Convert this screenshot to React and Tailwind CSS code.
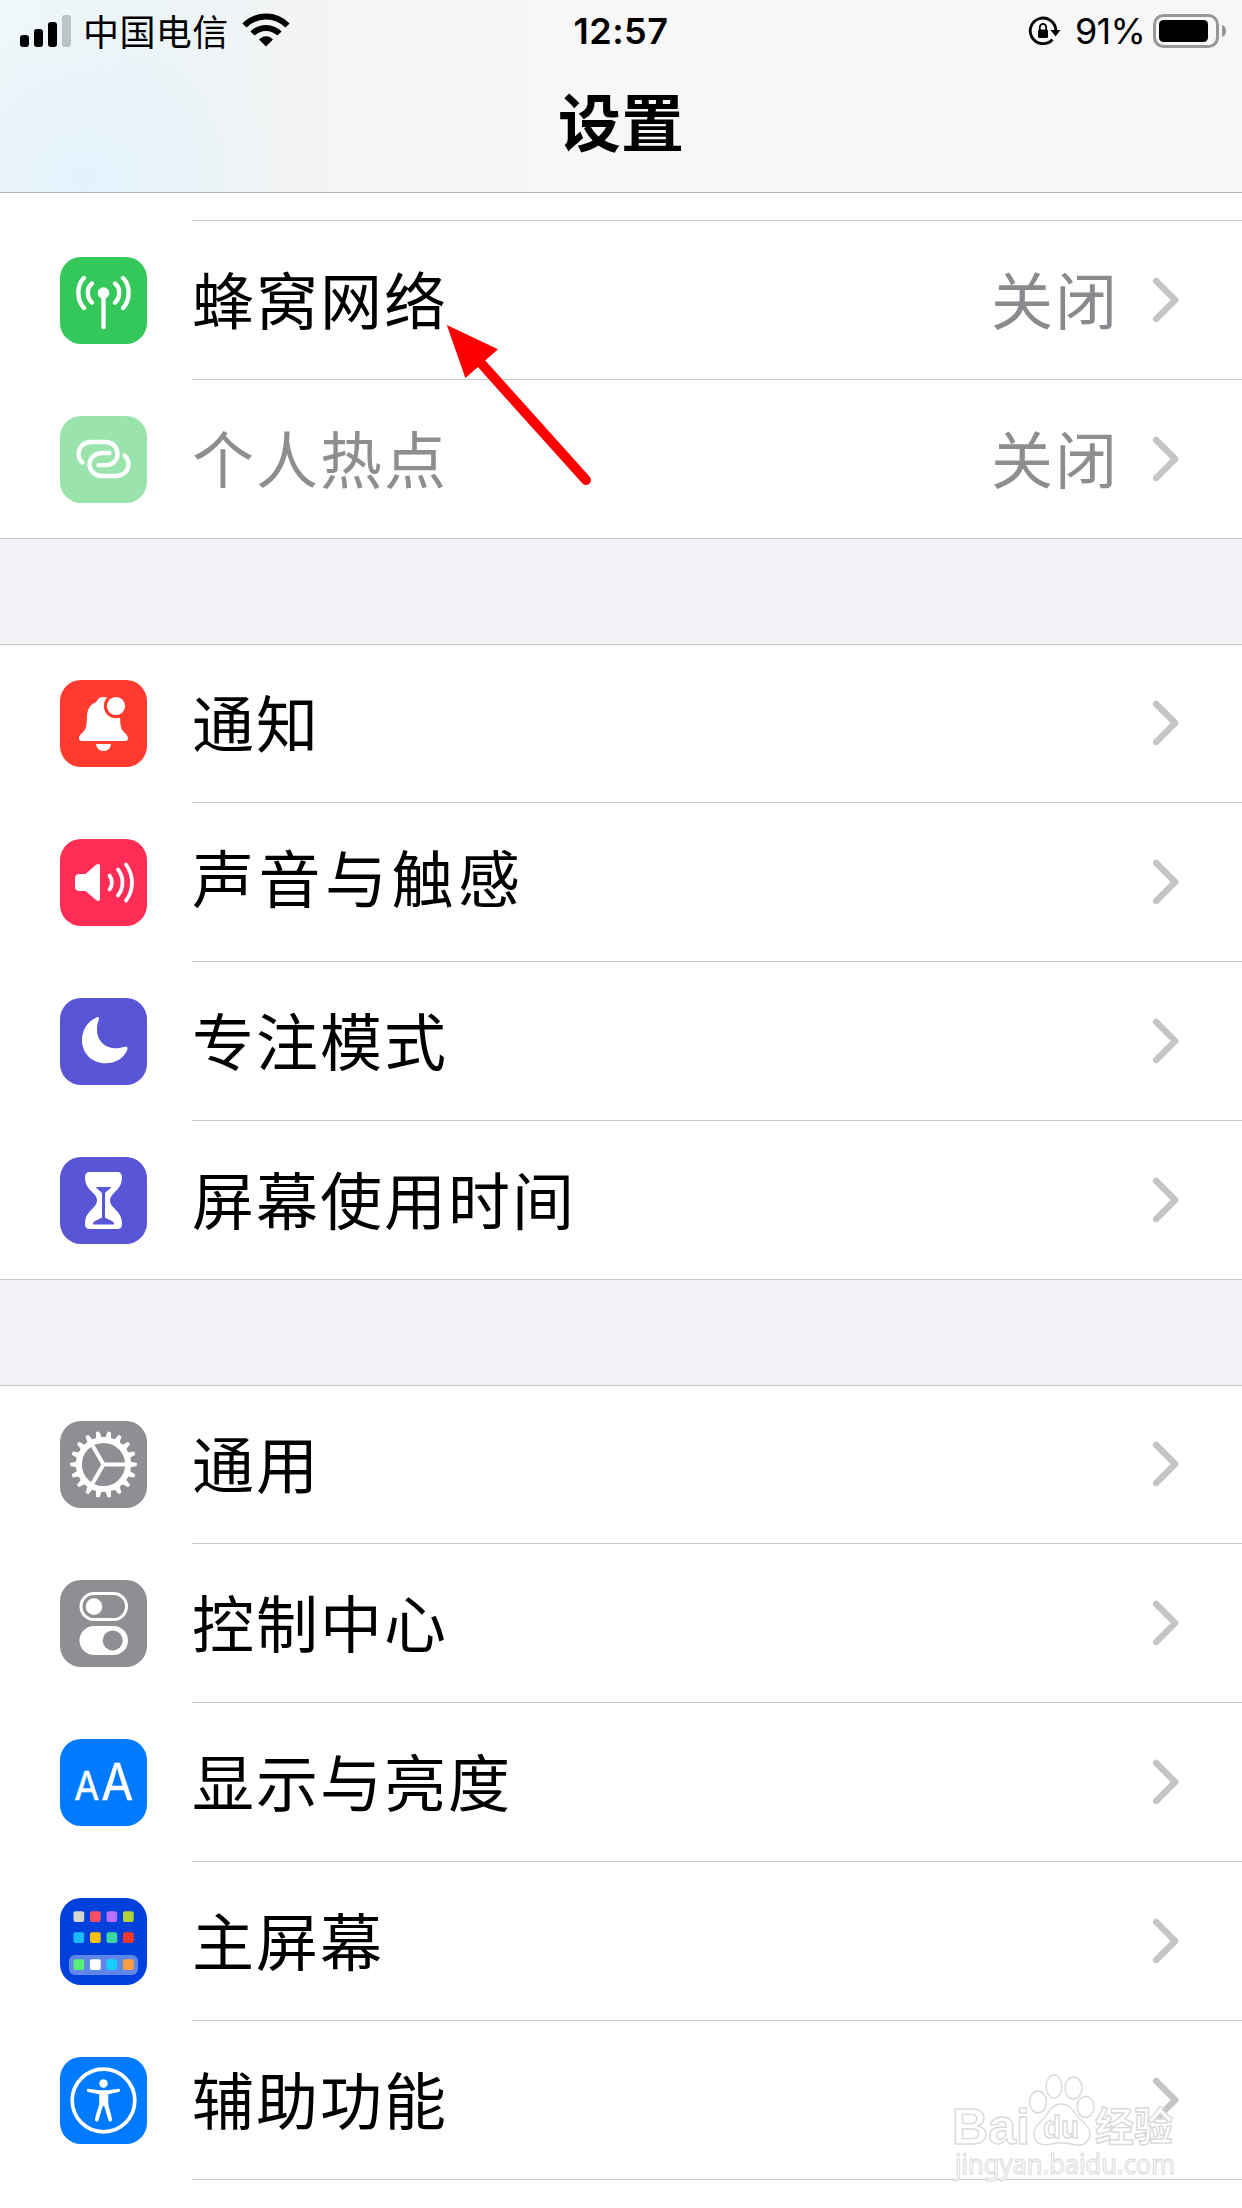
import React from 'react';

const SPOKES = [0, 120, 240];
const TEETH = Array.from({ length: 18 }, (_, i) => i * 20);

const APPS = [
    { x: 13.5, y: 13.3, fill: '#d8d5cd' },
    { x: 30, y: 13.3, fill: '#ff4f64' },
    { x: 46.5, y: 13.3, fill: '#b870ff' },
    { x: 63, y: 13.3, fill: '#b1d235' },
    { x: 13.5, y: 34.3, fill: '#1cbcfa' },
    { x: 30, y: 34.3, fill: '#ffc000' },
    { x: 46.5, y: 34.3, fill: '#3cd8a4' },
    { x: 63, y: 34.3, fill: '#f9382c' },
    { x: 13.5, y: 61.3, fill: '#58ef74' },
    { x: 30, y: 61.3, fill: '#ffffff' },
    { x: 46.5, y: 61.3, fill: '#1acdff' },
    { x: 63, y: 61.3, fill: '#ff9c40' },
];

// Iconos de cada fila, todos sobre un lienzo de 87x87
const icons = {
    cellular: (
        <g fill="none" stroke="#fff" strokeWidth="4.4" strokeLinecap="round">
            <circle cx="43.5" cy="36" r="5.8" fill="#fff" stroke="none" />
            <path d="M43.5 37v33" />
            <path d="M32 26.5C26.4 31 26.4 41 32 45.5M55 26.5C60.6 31 60.6 41 55 45.5" />
            <path d="M24 21C16.5 28 16.5 43.5 24 51M63 21C70.5 28 70.5 43.5 63 51" />
        </g>
    ),
    hotspot: (
        <g fill="none" stroke="#fff" strokeWidth="4.3" strokeLinecap="round">
            <path d="M22.6 46.5C20 44.5 18.6 41.5 18.6 38C18.6 31 24 26 31 26H45.5C52.5 26 57.5 31 57.5 38C57.5 44.5 52.5 49.2 46 49.2H38.5" />
            <path d="M49.5 37H42C35 37 29.5 42 29.5 48.5C29.5 55 35 60 42 60H56C63 60 68.5 55 68.5 48.5C68.5 44.5 67 41.5 64.5 39.5" />
        </g>
    ),
    bell: (
        <g fill="#fff">
            <path d="M43.5 17C39.5 17 37.2 19 36.3 22C30 24.5 27.3 29.5 27 36C26.7 43 26.6 48 24 51C21.5 54 19 55 19 58.5C19 60 20 61 22 61H65C67 61 68 60 68 58.5C68 55 65.5 54 63 51C60.4 48 60.3 43 60 36C59.7 29.5 57 24.5 50.7 22C49.8 19 47.5 17 43.5 17Z" />
            <path d="M36 64H51C50.5 68.5 47.5 71 43.5 71S36.5 68.5 36 64Z" />
            <circle cx="56" cy="26" r="12.2" fill="#ff3b30" />
            <circle cx="56" cy="26" r="9.1" />
        </g>
    ),
    sound: (
        <g fill="none" stroke="#fff" strokeWidth="3.8" strokeLinecap="round">
            <path d="M19.5 35H25.5L36 25.8C38 24.2 40 24.8 40 27V60C40 62 38 62.6 36 61L25.5 52H19.5C16.5 52 15 50.5 15 47.5V39.5C15 36.5 16.5 35 19.5 35Z" fill="#fff" stroke="none" />
            <path d="M49.5 36.5C52.7 40.5 52.7 46.5 49.5 50.5" />
            <path d="M58 30.5C64 38 64 49 58 56.5" />
            <path d="M66 25.5C74 36.5 74 51 66 61.5" />
        </g>
    ),
    moon: (
        <path fill="#fff" d="M38.9 20.8C38.3 24 37 26 37 32C37 43 45 50.3 56 50.3C61 50.3 63 48.8 65.8 48.8C67.7 48.9 68 50 67 52.5C63.5 60.5 55.5 65.3 45.5 65.3C32 65.3 22 55.5 22 42C22 32 27.5 23.5 36.5 19.4C38.3 18.6 39.2 19.3 38.9 20.8Z" />
    ),
    hourglass: (
        <g>
            <path fill="#fff" d="M29.5 15H57.5C60.5 15 62 17 62 20C62 28 58.5 31.5 54 36C51.5 38.5 50 40.5 50 43.5S51.5 48.5 54 51C58.5 55.5 62 59 62 67C62 70.5 60.5 72 57.5 72H29.5C26.5 72 25 70.5 25 67C25 59 28.5 55.5 33 51C35.5 48.5 37 46.5 37 43.5S35.5 38.5 33 36C28.5 31.5 25 28 25 20C25 17 26.5 15 29.5 15Z" />
            <path fill="#5856d6" d="M36 30H51C50.5 32 45 35 45 36.5V60.5C46 61.5 54 64 54 66.2C54 67.4 53.5 67.6 52.5 67.6H34.5C33.5 67.6 33 67.4 33 66.2C33 64 41 61.5 42 60.5V36.5C42 35 36.5 32 36 30Z" />
        </g>
    ),
    gear: (
        <g stroke="#fff" fill="none">
            <circle cx="43.5" cy="43.5" r="24.6" strokeWidth="6" />
            {TEETH.map((a) => (
                <path key={a} d="M70 40.5L76.8 41.9V45.1L70 46.5Z" fill="#fff" stroke="none" transform={`rotate(${a} 43.5 43.5)`} />
            ))}
            {SPOKES.map((a) => (
                <path key={a} d="M43 43.5H66" strokeWidth="4" transform={`rotate(${a} 43.5 43.5)`} />
            ))}
        </g>
    ),
    toggles: (
        <g fill="#fff">
            <rect x="21" y="13.5" width="45.5" height="26" rx="13" fill="none" stroke="#fff" strokeWidth="3" />
            <circle cx="34" cy="26.6" r="8.3" />
            <rect x="19.5" y="46" width="48.5" height="29" rx="14.5" />
            <circle cx="52.7" cy="60.4" r="10" fill="#8e8e93" />
        </g>
    ),
    letters: (
        <g fill="#fff" stroke="#fff" strokeWidth="0.5" strokeLinejoin="round" className="font-['Inter',sans-serif]">
            <text x="14.3" y="61" fontSize="39" textLength="25" lengthAdjust="spacingAndGlyphs">A</text>
            <text x="41.3" y="61" fontSize="50" textLength="32" lengthAdjust="spacingAndGlyphs">A</text>
        </g>
    ),
    home: (
        <g>
            <rect x="9" y="57" width="69" height="20" rx="6" fill="#5f87ea" />
            {APPS.map((app) => (
                <rect key={`${app.x}-${app.y}`} x={app.x} y={app.y} width="10.7" height="10.7" rx="2" fill={app.fill} />
            ))}
        </g>
    ),
    accessibility: (
        <g fill="#fff">
            <circle cx="43.5" cy="43.5" r="31.3" fill="none" stroke="#fff" strokeWidth="3.7" />
            <circle cx="43.5" cy="26.5" r="4.2" />
            <path d="M28.5 31.7L39 33.2H48L58.5 31.7C60.6 31.7 60.6 34.5 58.7 34.9L48.3 37.2V47C49 52 51.5 57 52 62.5C52 65 49 65.2 48.4 63L44.5 50C44 48.7 43 48.7 42.5 50L38.6 63C38 65.2 35 65 35 62.5C35.5 57 38.5 52 39.2 47V37.2L28.3 34.9C26.4 34.5 26.4 31.7 28.5 31.7Z" />
        </g>
    ),
};

const groups = [
    [
        { name: '蜂窝网络', icon: 'cellular', color: 'bg-[#34c759]', value: '关闭' },
        { name: '个人热点', icon: 'hotspot', color: 'bg-[#9ae3ac]', value: '关闭', disabled: true },
    ],
    [
        { name: '通知', icon: 'bell', color: 'bg-[#ff3b30]' },
        { name: '声音与触感', icon: 'sound', color: 'bg-[#ff2d55]', label: 'tracking-[4.5px] pb-[13px]' },
        { name: '专注模式', icon: 'moon', color: 'bg-[#5856d6]' },
        { name: '屏幕使用时间', icon: 'hourglass', color: 'bg-[#5856d6]' },
    ],
    [
        { name: '通用', icon: 'gear', color: 'bg-[#8e8e93]' },
        { name: '控制中心', icon: 'toggles', color: 'bg-[#8e8e93]' },
        { name: '显示与亮度', icon: 'letters', color: 'bg-[#007aff]' },
        { name: '主屏幕', icon: 'home', color: 'bg-[#0040dd]' },
        { name: '辅助功能', icon: 'accessibility', color: 'bg-[#007aff]' },
    ],
];

function classNames(...classes) {
    return classes.filter(Boolean).join(' ')
}

function StatusBar() {
    return (
        <div className="grid h-[62px] grid-cols-3 items-center">
            <div className="flex items-center pl-5">
                <svg width="52" height="32" viewBox="0 0 52 32">
                    <rect x="0" y="20" width="9" height="12" rx="3" />
                    <rect x="14" y="14" width="9" height="18" rx="3" />
                    <rect x="28" y="7" width="9" height="25" rx="3" />
                    <rect x="42" y="0" width="9" height="32" rx="3" fill="#bcc3c6" />
                </svg>
                <span className="ml-[11px] pb-[3px] text-[36px] leading-none tracking-[0.4px]">中国电信</span>
                <svg className="ml-[13px] mb-[2px]" width="48" height="34" viewBox="0 0 48 34" fill="none" stroke="#000" strokeWidth="6">
                    <path d="M2.5 12.5C14.5 0.5 33.5 0.5 45.5 12.5" />
                    <path d="M10.5 20.5C18 13 30 13 37.5 20.5" />
                    <path d="M17 26.5C21 22 27 22 31 26.5L24 33.5Z" fill="#000" stroke="none" />
                </svg>
            </div>
            <p className="text-center text-[36px] font-semibold leading-none tracking-[0.5px] font-['Inter','Noto_Sans_CJK_SC',sans-serif]">12:57</p>
            <div className="flex items-center justify-end pr-[15px]">
                <svg width="33" height="32" viewBox="0 0 33 32">
                    <path d="M24.5 24.5A12.8 12.8 0 1 1 27.8 15" fill="none" stroke="#000" strokeWidth="2.8" />
                    <path d="M22.5 15H32.5L27.5 21.5Z" />
                    <rect x="10" y="14.5" width="10" height="8.5" rx="1.5" />
                    <path d="M11.8 15V12.2A3.2 3.4 0 0 1 18.2 12.2V15" fill="none" stroke="#000" strokeWidth="1.8" />
                </svg>
                <span className="ml-[14px] text-[36px] leading-none tracking-[-0.8px] font-['Inter',sans-serif]">91%</span>
                <svg className="ml-[8px]" width="74" height="34" viewBox="0 0 74 34">
                    <rect x="1.5" y="1.5" width="63" height="31" rx="9" fill="none" stroke="#979797" strokeWidth="3" />
                    <rect x="6" y="6" width="49" height="22" rx="4.5" />
                    <path d="M69 11C72.5 12.5 73 15 73 17S72.5 21.5 69 23Z" fill="#979797" />
                </svg>
            </div>
        </div>
    );
}

function Row({ item }) {
    return (
        <li className="group flex h-[159px] items-center pl-[60px]">
            <div className={classNames('size-[87px] shrink-0 rounded-[21px]', item.color)}>
                <svg width="87" height="87" viewBox="0 0 87 87">{icons[item.icon]}</svg>
            </div>
            <div className="ml-[45px] flex h-full flex-1 items-center border-b border-[#c6c6c8] pr-[62px] group-last:border-transparent">
                <span className={classNames('flex-1 text-[62px] leading-none', item.label || 'pb-[5px] tracking-[2px]', item.disabled && 'text-[#8e8e8e]')}>
                    {item.name}
                </span>
                {item.value && (
                    <span className={classNames('mr-[33px] pb-[5px] text-[62px] leading-none tracking-[2px]', item.disabled ? 'text-[#8e8e8e]' : 'text-[#8a8a8e]')}>
                        {item.value}
                    </span>
                )}
                <svg width="28" height="46" viewBox="0 0 28 46" fill="none" stroke="#c5c5c7" strokeWidth="6.5" strokeLinecap="round" strokeLinejoin="round">
                    <path d="M4.2 4L23.2 23L4.2 42" />
                </svg>
            </div>
        </li>
    );
}

function Watermark() {
    return (
        <svg
            className="absolute left-[948px] top-[2068px]"
            width="240"
            height="120"
            viewBox="0 0 240 120"
            fill="#fff"
            stroke="#d9d9d9"
            strokeWidth="1.4"
        >
            <g className="font-['Liberation_Sans','Noto_Sans_CJK_SC',sans-serif]" fontWeight="700">
                <text x="4" y="76" fontSize="50" textLength="78" lengthAdjust="spacingAndGlyphs">Bai</text>
                <ellipse cx="90" cy="34" rx="8.5" ry="11" />
                <ellipse cx="106" cy="18.5" rx="8" ry="11.5" />
                <ellipse cx="125.5" cy="20" rx="8.5" ry="11" />
                <ellipse cx="137.5" cy="39" rx="8.5" ry="10.5" />
                <path d="M113 36C123 36 126 45 131 50C139 57 144 63 141 70C138 78 130 78 123 76C117 74.5 109 74.5 103 76C94 78 87 76 86 67C85 59 92 55 97 49C101 43 105 36 113 36Z" />
                <text x="95" y="70" fontSize="31" textLength="36" lengthAdjust="spacingAndGlyphs">du</text>
                <text x="147" y="73" fontSize="40" className="font-['Noto_Sans_CJK_SC',sans-serif]" textLength="78" lengthAdjust="spacingAndGlyphs">经验</text>
            </g>
            <text x="7" y="106" fontSize="27" strokeWidth="1" textLength="220" lengthAdjust="spacingAndGlyphs" className="font-['Noto_Sans',sans-serif]">jingyan.baidu.com</text>
        </svg>
    );
}

export default function App() {
    return (
        <div className="relative h-[2208px] w-[1242px] overflow-hidden bg-white text-black font-['Noto_Sans_CJK_SC',sans-serif]">
            <header className="h-[193px] border-b border-[#b2b2b2] bg-[#f7f7f7] bg-[radial-gradient(ellipse_190px_170px_at_85px_180px,#e3f2fc_0%,#eaf3f9_50%,transparent_100%),linear-gradient(90deg,#f0f7fa_0%,#ecf4f7_12%,#f4f4f4_26%,#f7f7f7_45%)]">
                <StatusBar />
                <h1 className="pt-[25px] text-center text-[63px] font-bold leading-none">设置</h1>
            </header>
            <div className="ml-48 h-7 border-b border-[#c6c6c8]" />

            {groups.map((items, i) => (
                <React.Fragment key={i}>
                    {i > 0 && <div className="-my-px h-[107px] border-y border-[#c6c6c8] bg-[#f2f2f7]" />}
                    <ul>
                        {items.map((item) => (
                            <Row key={item.name} item={item} />
                        ))}
                    </ul>
                </React.Fragment>
            ))}
            <div className="-mt-px ml-48 h-px bg-[#c6c6c8]" />

            {/* Flecha que señala la primera opción */}
            <svg className="absolute left-[440px] top-[318px]" width="160" height="175" viewBox="0 0 160 175" fill="#f00">
                <path d="M6.8 7L58 31.3L25.4 60Z" />
                <path d="M40 44L146 162" stroke="#f00" strokeWidth="10" strokeLinecap="round" />
            </svg>
            <Watermark />
        </div>
    );
}
